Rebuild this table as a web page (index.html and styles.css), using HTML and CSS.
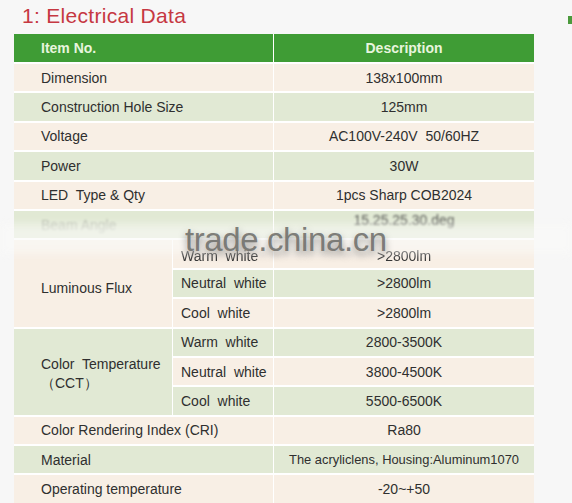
FILE: index.html
```html
<!DOCTYPE html>
<html>
<head>
<meta charset="utf-8">
<link rel="stylesheet" href="styles.css">
</head>
<body>
<div class="page">
  <h1 class="title">1: Electrical Data</h1>
  <span class="mark"></span>
  <table class="spec">
    <colgroup><col class="c1"><col class="c2"><col class="c3"></colgroup>
    <thead>
      <tr class="head"><th colspan="2" class="lh">Item No.</th><th class="rh">Description</th></tr>
    </thead>
    <tbody>
      <tr class="b"><td colspan="2" class="l">Dimension</td><td class="r">138x100mm</td></tr>
      <tr class="g"><td colspan="2" class="l">Construction Hole Size</td><td class="r">125mm</td></tr>
      <tr class="b"><td colspan="2" class="l">Voltage</td><td class="r">AC100V-240V&nbsp; 50/60HZ</td></tr>
      <tr class="g"><td colspan="2" class="l">Power</td><td class="r">30W</td></tr>
      <tr class="b"><td colspan="2" class="l">LED&nbsp; Type &amp; Qty</td><td class="r">1pcs Sharp COB2024</td></tr>
      <tr class="g blur"><td colspan="2" class="l"><span class="fuzz faint">Beam Angle</span></td><td class="r"><span class="fuzz up">15.25.25.30.deg</span></td></tr>
      <tr class="b"><td rowspan="3" class="l span">Luminous Flux</td><td class="s"><span class="fuzz2">Warm&nbsp; white</span></td><td class="r"><span class="fuzz2">&gt;2800lm</span></td></tr>
      <tr class="g"><td class="s">Neutral&nbsp; white</td><td class="r">&gt;2800lm</td></tr>
      <tr class="b"><td class="s">Cool&nbsp; white</td><td class="r">&gt;2800lm</td></tr>
      <tr class="g"><td rowspan="3" class="l span two">Color&nbsp; Temperature<br>（CCT）</td><td class="s">Warm&nbsp; white</td><td class="r">2800-3500K</td></tr>
      <tr class="b"><td class="s">Neutral&nbsp; white</td><td class="r">3800-4500K</td></tr>
      <tr class="g"><td class="s">Cool&nbsp; white</td><td class="r">5500-6500K</td></tr>
      <tr class="b"><td colspan="2" class="l">Color Rendering Index (CRI)</td><td class="r">Ra80</td></tr>
      <tr class="g"><td colspan="2" class="l">Material</td><td class="r small">The acryliclens, Housing:Aluminum1070</td></tr>
      <tr class="b"><td colspan="2" class="l">Operating temperature</td><td class="r">-20~+50</td></tr>
    </tbody>
  </table>
  <div class="haze"></div>
  <div class="wm">trade.china.cn</div>
</div>
</body>
</html>
```
FILE: styles.css
```css
html, body {
  margin: 0;
  padding: 0;
  background: #f7f7f7;
}
.page {
  position: relative;
  width: 572px;
  height: 503px;
  overflow: hidden;
  font-family: "Liberation Sans", Arial, sans-serif;
  color: #2f2f2f;
}
.title {
  margin: 0;
  padding: 3px 0 0 22px;
  font-size: 21px;
  font-weight: normal;
  color: #c63842;
  letter-spacing: 0.3px;
  line-height: 25px;
  height: 27px;
}
.mark {
  position: absolute;
  left: 568px;
  top: 16px;
  width: 6px;
  height: 8px;
  background: #4b9a3c;
}
.spec {
  margin-left: 14px;
  margin-top: 4px;
  width: 520px;
  table-layout: fixed;
  border-collapse: separate;
  border-spacing: 0;
  font-size: 14px;
}
.c1 { width: 158px; }
.c2 { width: 101px; }
.c3 { width: 261px; }
.spec th {
  background: #3f9c35;
  color: #e8f5de;
  font-weight: bold;
  height: 28px;
  padding: 0;
  border-bottom: 2px solid #fff;
}
.spec th.lh {
  text-align: left;
  padding-left: 27px;
}
.spec th.rh {
  border-left: 1px solid #fff;
}
.spec td {
  height: 27.4px;
  padding: 0;
  border-bottom: 2px solid #fff;
  white-space: nowrap;
}
.b td { background: #f8efe5; }
.g td { background: #e1e9d4; }
.spec td.l {
  padding-left: 27px;
  text-align: left;
}
.spec td.s {
  padding-left: 8px;
  border-left: 1px solid #fff;
}
.spec td.r {
  text-align: center;
  border-left: 1px solid #fff;
}
.spec td.span {
  padding-top: 10px;
}
.spec td.two {
  line-height: 19px;
  padding-top: 5px;
}
.spec td.small {
  font-size: 12.9px;
}
.fuzz {
  filter: blur(1.2px);
  display: inline-block;
  opacity: 0.8;
}
.fuzz.faint {
  opacity: 0.25;
}
.fuzz.up {
  position: relative;
  top: -5px;
}
.fuzz2 {
  filter: blur(0.6px);
  display: inline-block;
  position: relative;
  top: 2px;
}
.haze {
  position: absolute;
  left: 0;
  top: 224px;
  width: 572px;
  height: 30px;
  background: rgba(250, 250, 248, 0.6);
  filter: blur(4px);
}
.wm {
  position: absolute;
  left: 185px;
  top: 221px;
  font-size: 33px;
  line-height: 38px;
  color: rgba(112, 112, 108, 0.9);
  letter-spacing: -0.4px;
  text-shadow: 0 4px 7px rgba(50, 50, 50, 0.55);
}
```
